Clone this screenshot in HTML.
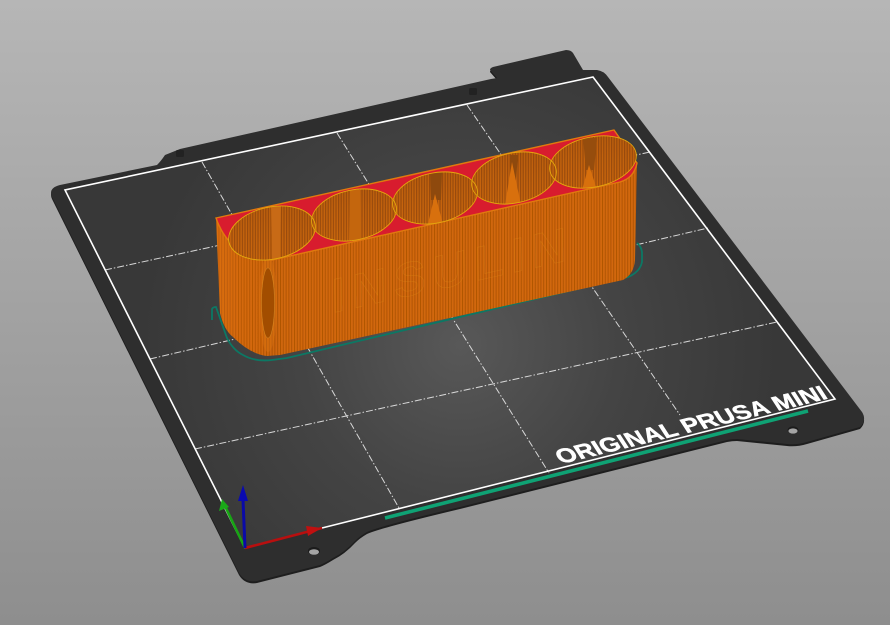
<!DOCTYPE html>
<html><head><meta charset="utf-8">
<style>html,body{margin:0;padding:0;background:#a0a0a0;overflow:hidden}svg{display:block}</style>
</head><body>
<svg xmlns="http://www.w3.org/2000/svg" width="890" height="625" viewBox="0 0 890 625">
<defs>
<linearGradient id="bg" x1="0" y1="0" x2="0" y2="1"><stop offset="0" stop-color="#b6b6b6"/><stop offset="1" stop-color="#8e8e8e"/></linearGradient>
<radialGradient id="bed" gradientUnits="userSpaceOnUse" cx="460" cy="345" r="320"><stop offset="0" stop-color="#585858"/><stop offset=".5" stop-color="#444"/><stop offset="1" stop-color="#383838"/></radialGradient>
<pattern id="st" width="2.8" height="8" patternUnits="userSpaceOnUse"><rect width="2.8" height="8" fill="#d66a0a"/><rect width="1" height="8" fill="#b35606"/></pattern>
<pattern id="sti" width="2.6" height="8" patternUnits="userSpaceOnUse"><rect width="2.6" height="8" fill="#c9660f"/><rect width="1.2" height="8" fill="#9a4c08"/></pattern>
<linearGradient id="shade" x1="0" y1="0" x2="1" y2="0"><stop offset="0" stop-color="#e87a10" stop-opacity=".25"/><stop offset=".1" stop-color="#c05a00" stop-opacity=".12"/><stop offset=".16" stop-color="#000" stop-opacity=".02"/><stop offset="1" stop-color="#000" stop-opacity=".02"/></linearGradient>
<linearGradient id="ins" x1="0" y1="0" x2="0" y2="1"><stop offset="0" stop-color="#7a3c00" stop-opacity=".2"/><stop offset=".6" stop-color="#8a4400" stop-opacity=".05"/><stop offset="1" stop-color="#e08020" stop-opacity=".1"/></linearGradient>
<clipPath id="c1"><ellipse cx="272" cy="233" rx="44" ry="26" transform="rotate(-12 272 233)"/></clipPath>
<clipPath id="c2"><ellipse cx="354" cy="215" rx="43" ry="25" transform="rotate(-12 354 215)"/></clipPath>
<clipPath id="c3"><ellipse cx="435" cy="198" rx="43" ry="25" transform="rotate(-12 435 198)"/></clipPath>
<clipPath id="c4"><ellipse cx="514" cy="178" rx="43" ry="25" transform="rotate(-12 514 178)"/></clipPath>
<clipPath id="c5"><ellipse cx="593" cy="162" rx="44" ry="25" transform="rotate(-12 593 162)"/></clipPath>
<filter id="b1"><feGaussianBlur stdDeviation=".35"/></filter>
</defs>
<rect width="890" height="625" fill="url(#bg)"/>

<!-- plate -->
<path d="M60 185 L157 165 Q161 161 165 155 L180 149 L491 79 L497 78 L490 70 Q490 68 493 67 L566 50 Q571 50 573 53 L583 70 L597 70 Q604 71 608 77 L862 412 Q867 420 860 427 L807 442 Q797 445 787 444 L737 439 Q732 439 727 440 L460 507 Q380 526 367 532 Q360 536 355 541 Q345 552 333 558 Q325 563 320 565 L257 581 Q245 583 239 573 L52 197 Q48 188 60 185Z" fill="#1e1e1e" transform="translate(0 2)"/>
<path d="M60 185 L157 165 Q161 161 165 155 L180 149 L491 79 L497 78 L490 70 Q490 68 493 67 L566 50 Q571 50 573 53 L583 70 L597 70 Q604 71 608 77 L862 412 Q867 420 860 427 L807 442 Q797 445 787 444 L737 439 Q732 439 727 440 L460 507 Q380 526 367 532 Q360 536 355 541 Q345 552 333 558 Q325 563 320 565 L257 581 Q245 583 239 573 L52 197 Q48 188 60 185Z" fill="#2e2e2e"/>
<path d="M65 190 L593 77 L835 399 L245 548Z" fill="url(#bed)"/>

<!-- grid -->
<g stroke="#e8e8e8" stroke-width="1" fill="none" stroke-dasharray="7 2 1.5 2" opacity=".9">
<path d="M202 162 L399 508"/><path d="M337 133 L549 473"/><path d="M467 105 L680 415"/>
<path d="M105 270 L650 152"/><path d="M150 359 L708 228"/><path d="M195 449 L777 322"/>
</g>
<path d="M245 548 L65 190 L593 77 L835 399 L322 528" fill="none" stroke="#fff" stroke-width="1.6"/>

<!-- holes, pegs -->
<ellipse cx="314" cy="551" rx="6" ry="4" fill="#1c1c1c"/><ellipse cx="314" cy="552" rx="5" ry="2.8" fill="#a5a5a5"/>
<ellipse cx="793" cy="430" rx="5.5" ry="3.6" fill="#1c1c1c"/><ellipse cx="793" cy="431" rx="4.6" ry="2.6" fill="#a5a5a5"/>
<rect x="176" y="150" width="8" height="7" rx="1.5" fill="#222"/>
<rect x="469" y="88" width="8" height="7" rx="1.5" fill="#222"/>

<!-- green bar + label -->
<path d="M385 518 L808 411" stroke="#0fa274" stroke-width="3.6" fill="none"/>
<text transform="matrix(.971 -.238 .55 .85 561 464)" font-family="'Liberation Sans',sans-serif" font-weight="700" font-size="22" fill="#fff" stroke="#fff" stroke-width=".5" textLength="276" lengthAdjust="spacingAndGlyphs">ORIGINAL PRUSA MINI</text>

<!-- axes -->
<path d="M245 548 L322 528" stroke="#b80f0f" stroke-width="2.6"/>
<path d="M322 528 L306 526 L308 536Z" fill="#c01010"/>
<path d="M245 548 L224 504" stroke="#17a514" stroke-width="2.6"/>
<path d="M222 499 L219 511 L229 507Z" fill="#1aa818"/>
<path d="M245 548 L243 500" stroke="#0a0aa8" stroke-width="3"/>
<path d="M243 485 L238 501 L248 501Z" fill="#0a0ab0"/>

<!-- skirt -->
<path d="M212 320 L212 309 Q213 307 216 307 L227 338 Q233 350 243 355 Q255 362 272 360 L287 358 L628 277 Q640 272 642 262 L642 252 Q641 246 637 243" fill="none" stroke="#0c7864" stroke-width="1.8"/>

<g filter="url(#b1)">
<!-- body -->
<path d="M216 218 L220 313 Q224 330 233 337 Q250 354 267 356 L280 355 L623 280 Q634 274 635 260 L637 163 L614 130 Z" fill="url(#st)"/>
<path d="M216 218 L220 313 Q224 330 233 337 Q250 354 267 356 L280 355 L623 280 Q634 274 635 260 L637 163 L614 130 Z" fill="url(#shade)"/>
<!-- side slot -->
<ellipse cx="268" cy="304" rx="9" ry="48" fill="#e27a14" opacity=".3"/>
<ellipse cx="268" cy="303" rx="6.5" ry="35" fill="#a24e06"/>
<ellipse cx="268" cy="303" rx="6.5" ry="35" fill="none" stroke="#e8a030" stroke-width=".6" opacity=".6"/>

<!-- embossed word -->
<text transform="matrix(.976 -.218 .02 1 332 313)" font-family="'Liberation Sans',sans-serif" font-weight="700" font-size="48" fill="none" stroke="#e89a20" stroke-width=".6" opacity=".28" textLength="240" lengthAdjust="spacing">INSULIN</text>

<!-- top -->
<path d="M216 218 L614 130 L637 163 Q634 178 620 182 L272 260 Q250 260 233 245 Q222 235 216 218Z" fill="#d81e2e" stroke="#e07a10" stroke-width="1.4"/>

<!-- interiors -->
<g clip-path="url(#c1)"><rect x="220" y="195" width="110" height="80" fill="url(#sti)"/><rect x="220" y="195" width="110" height="80" fill="url(#ins)"/>
<path d="M271 205 L281 205 L280 262 L272 262Z" fill="#c86a12"/></g>
<g clip-path="url(#c2)"><rect x="305" y="180" width="100" height="70" fill="url(#sti)"/><rect x="305" y="180" width="100" height="70" fill="url(#ins)"/>
<path d="M350 190 L360 190 L361 240 L349 240Z" fill="#c4660f"/></g>
<g clip-path="url(#c3)"><rect x="388" y="165" width="100" height="70" fill="url(#sti)"/><rect x="388" y="165" width="100" height="70" fill="url(#ins)"/>
<path d="M430 172 L442 172 L441 200 L431 200Z" fill="#8e4a08"/><path d="M435 194 L428 224 L443 224Z" fill="#d8700e"/></g>
<g clip-path="url(#c4)"><rect x="468" y="145" width="100" height="70" fill="url(#sti)"/><rect x="468" y="145" width="100" height="70" fill="url(#ins)"/>
<path d="M510 155 L518 155 L516 180 L511 180Z" fill="#8e4a08"/><path d="M512 162 L505 205 L521 205Z" fill="#d8700e"/></g>
<g clip-path="url(#c5)"><rect x="546" y="130" width="100" height="70" fill="url(#sti)"/><rect x="546" y="130" width="100" height="70" fill="url(#ins)"/>
<path d="M583 138 L597 138 L594 170 L586 170Z" fill="#964e08"/><path d="M589 165 L582 190 L597 190Z" fill="#d8700e"/></g>
<g fill="none" stroke="#e4a80e" stroke-width=".9">
<ellipse cx="272" cy="233" rx="44" ry="26" transform="rotate(-12 272 233)"/>
<ellipse cx="354" cy="215" rx="43" ry="25" transform="rotate(-12 354 215)"/>
<ellipse cx="435" cy="198" rx="43" ry="25" transform="rotate(-12 435 198)"/>
<ellipse cx="514" cy="178" rx="43" ry="25" transform="rotate(-12 514 178)"/>
<ellipse cx="593" cy="162" rx="44" ry="25" transform="rotate(-12 593 162)"/>
</g>
</g>
</svg>
</body></html>
